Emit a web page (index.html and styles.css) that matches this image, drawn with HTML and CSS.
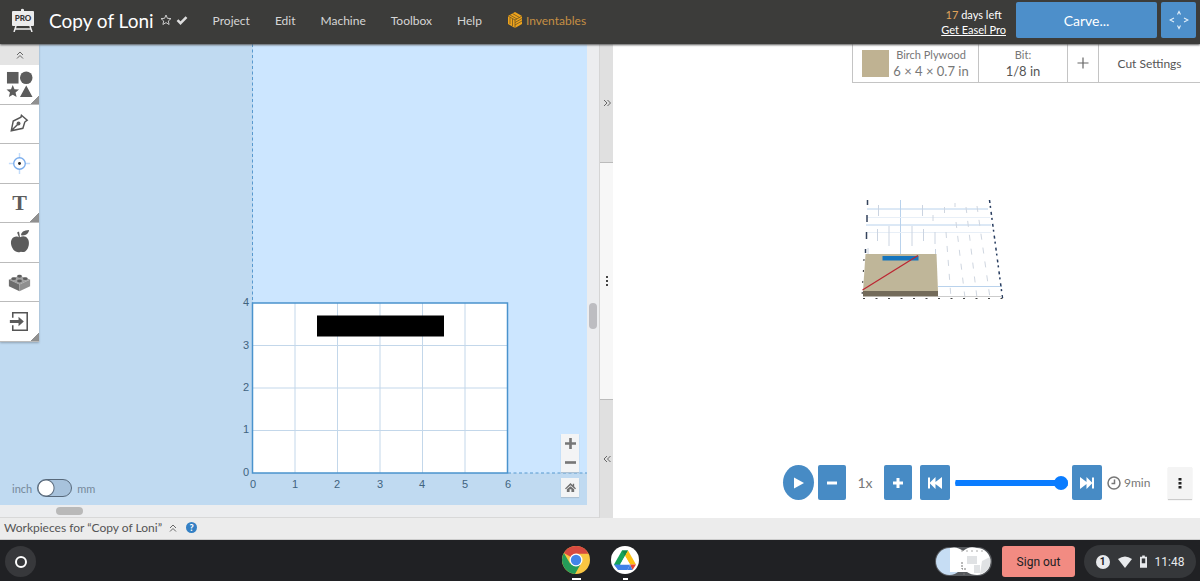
FILE: index.html
```html
<!DOCTYPE html>
<html lang="en">
<head>
<meta charset="utf-8">
<title>Copy of Loni</title>
<link rel="stylesheet" href="styles.css">
</head>
<body>
<header class="topbar">
  <svg class="logo" viewBox="0 0 24 24" role="img" aria-label="Easel Pro"><path d="M10 4V1.500q1-1.500 3 0V4" fill="#eee"/><rect x="1" y="3" width="22" height="15" rx="1" fill="#ececec"/><path d="M5 18l-2 6M19 18l2 6M4 21h16" stroke="#eee" stroke-width="1.500" fill="none"/><text class="logo-text" x="12" y="13" text-anchor="middle">PRO</text></svg>
  <h1 class="title">Copy of Loni</h1>
  <svg class="star" viewBox="0 0 12 12" aria-hidden="true"><path d="M6 1l1.400 3.300 3.600.3-2.700 2.400.8 3.500L6 8.600l-3.100 1.900.8-3.500L1 4.600l3.600-.3z" fill="none" stroke="#ccc" stroke-width="1"/></svg>
  <svg class="check" viewBox="0 0 12 12" aria-hidden="true"><path d="M1.500 6.200l3 3 6-6" fill="none" stroke="#ddd" stroke-width="2.500"/></svg>
  <nav class="menu">
    <a href="#project">Project</a><a href="#edit">Edit</a><a href="#machine">Machine</a><a href="#toolbox">Toolbox</a><a href="#help">Help</a>
    <a href="#inventables" class="brand"><svg viewBox="0 0 16 16" aria-hidden="true"><path d="M8 0l7 4v8l-7 4-7-4V4z" fill="#eea31c"/><path d="M8 16V8L1 4M8 8l7-4M3 5.500v6.500M5.500 7v7M3 3l7 4M5.500 1.500l7 4M8 10.500l7-4M8 13l7-4" stroke="#5b4a22" stroke-width=".7" fill="none"/></svg>Inventables</a>
  </nav>
  <p class="trial"><span><b>17</b> days left</span><a href="#pro">Get Easel Pro</a></p>
  <button class="carve" type="button">Carve...</button>
  <button class="jog" type="button" aria-label="Jog machine"><svg viewBox="0 0 20 20" aria-hidden="true"><path d="M8.500 4.500L10 1.500l1.500 3M8.500 15.500l1.500 3 1.500-3M5 8l-4 2 4 2M15 8l4 2-4 2" fill="none" stroke="#e4f0fa" stroke-width="1.100"/></svg></button>
</header>

<main class="workspace">
  <section class="design" aria-label="Design">
    <div class="canvas">
      <svg class="drawing" viewBox="0 44 587 461" preserveAspectRatio="xMinYMax slice">
        <rect y="44" width="587" height="461" fill="#c0daf1"/>
        <rect x="253" y="44" width="334" height="429" fill="#cce6ff"/>
        <path d="M252.500 44v260M508 473h79" stroke="#5799cf" stroke-dasharray="3 2.500" fill="none"/>
        <rect x="252.500" y="303" width="255" height="170" fill="#fff"/>
        <path d="M295 303v170M337.500 303v170M380 303v170M422.500 303v170M465 303v170M253 345.500h255M253 388h255M253 430.500h255" stroke="#c3d7ea"/>
        <rect x="252.500" y="303" width="255" height="170" fill="none" stroke="#4a93cd" stroke-width="1.500"/>
        <rect x="317" y="315.500" width="127" height="21" fill="#000"/>
        <g class="axis" text-anchor="end"><text x="249" y="306">4</text><text x="249" y="349">3</text><text x="249" y="391">2</text><text x="249" y="433">1</text><text x="249" y="476">0</text></g>
        <g class="axis" text-anchor="middle"><text x="253" y="488">0</text><text x="295" y="488">1</text><text x="337" y="488">2</text><text x="380" y="488">3</text><text x="422" y="488">4</text><text x="465" y="488">5</text><text x="508" y="488">6</text></g>
      </svg>
      <div class="tools" role="toolbar" aria-label="Tools">
        <button class="collapse" type="button" aria-label="Collapse tools"><svg class="chev" viewBox="0 0 8 8" aria-hidden="true"><path d="M1 4l3-3 3 3M1 7.500l3-3 3 3"/></svg></button>
        <div class="tool-list">
          <button class="tool more" type="button" aria-label="Shapes"><svg viewBox="0 0 28 28" aria-hidden="true"><path d="M1 1h12v12H1z"/><circle cx="21" cy="7" r="6.500"/><path d="M7 14.500l1.800 4.400 4.700.4-3.600 3 1.100 4.700-4-2.500L3 27l1.100-4.700-3.600-3 4.700-.4zM21 15l6.500 12h-13z"/></svg></button>
          <button class="tool" type="button" aria-label="Pen"><svg viewBox="0 0 28 28" aria-hidden="true"><path d="M5.500 21.500l2-10 8-4 .5-2 6 5-2.500 2-2 6.500z M6 21l6-6" fill="none" stroke="#555" stroke-width="1.500"/><circle cx="13" cy="14" r="2"/></svg></button>
          <button class="tool" type="button" aria-label="Drill point"><svg viewBox="0 0 28 28" aria-hidden="true"><path d="M14 3v7M14 18v7M3 14h7M18 14h7" stroke="#c2dcfb" stroke-width="1.500"/><circle cx="14" cy="14" r="6" fill="#fff" stroke="#79acec" stroke-width="1.400"/><circle cx="14" cy="14" r="1.500" fill="#222"/></svg></button>
          <button class="tool more letter" type="button" aria-label="Text">T</button>
          <button class="tool" type="button" aria-label="Icons"><svg viewBox="0 0 28 28" aria-hidden="true"><path d="M14.500 8.500c3-1.500 6-1.200 8 1.500s1.500 8-.5 11-4 3.500-6.500 2.500c-4 1.500-7 0-9-4s-2-9 1.500-11c2-1.200 4.500-.8 5.500.2l-2-5 2-1zM15.500 6.500q0-5 8.500-5.500-1 6.500-8.500 5.500z"/></svg></button>
          <button class="tool" type="button" aria-label="Apps"><svg viewBox="0 0 28 28" aria-hidden="true"><path d="M3 11l11-4 11 4-11 5z" fill="#a2a2a2"/><path d="M3 11l11 5v7L3 18z" fill="#6d6d6d"/><path d="M14 16l11-5v7l-11 5z" fill="#909090"/><g fill="#5c5c5c"><ellipse cx="8" cy="10" rx="2.500" ry="1.500"/><ellipse cx="14" cy="7.500" rx="2.500" ry="1.500"/><ellipse cx="20" cy="10" rx="2.500" ry="1.500"/><ellipse cx="14" cy="12.500" rx="2.500" ry="1.500"/></g></svg></button>
          <button class="tool more" type="button" aria-label="Import"><svg viewBox="0 0 28 28" aria-hidden="true"><path d="M7 10V5h15v18H7v-5" fill="none" stroke="#555" stroke-width="1.600"/><path d="M4 12.500h9V9l5.500 5-5.500 5v-3.500H4z"/></svg></button>
        </div>
      </div>
      <div class="units"><span>inch</span><label class="switch"><input type="checkbox" aria-label="Use millimetres"></label><span>mm</span></div>
      <div class="zoom">
        <div class="zoom-pair">
          <button type="button" aria-label="Zoom in"><svg viewBox="0 0 10 10" aria-hidden="true"><path d="M5 0v10M0 5h10" stroke="#777" stroke-width="2.400"/></svg></button>
          <button type="button" aria-label="Zoom out"><svg viewBox="0 0 10 10" aria-hidden="true"><path d="M0 5h10" stroke="#777" stroke-width="2.400"/></svg></button>
        </div>
        <button type="button" aria-label="Reset view"><svg viewBox="0 0 12 12" aria-hidden="true"><path d="M6 1l2.500 2.500V2H10v3l2 2-1 .8L6 3.500 1 7.800 0 7zM6 4.500L10 8v3H7V8H5v3H2V8z" fill="#707070"/></svg></button>
      </div>
    </div>
    <div class="vscroll"><span></span></div>
    <div class="hscroll"><span></span></div>
  </section>
  <div class="splitter">
    <button class="end" type="button" aria-label="Expand design"><svg class="chev" viewBox="0 0 8 8" aria-hidden="true"><path d="M1 1l3 3-3 3M4.500 1l3 3-3 3"/></svg></button>
    <button class="grip" type="button" aria-label="Resize panes"><svg viewBox="0 0 4 10" aria-hidden="true"><path d="M1 0h2v2H1zM1 4h2v2H1zM1 8h2v2H1z" fill="#444"/></svg></button>
    <button class="end" type="button" aria-label="Expand preview"><svg class="chev" viewBox="0 0 8 8" aria-hidden="true"><path d="M4 1L1 4l3 3M7.500 1l-3 3 3 3"/></svg></button>
  </div>
  <section class="preview" aria-label="Preview">
    <svg class="scene" viewBox="613 44 587 474" aria-hidden="true">
      <g fill="none">
        <path d="M867 209h121M866 225h125M938 286.500h64M900.500 200v54" stroke="#b9d2ec"/>
        <path d="M866 232.500h125M867 217.500h123" stroke="#e8eff7"/>
        <path d="M878.500 205v11M922.500 205v11M889 226v20M912 226v20M877.500 229v12M923.500 229v12M935 232v12M868 248v6M935.500 249v5" stroke="#cbd4e1"/>
        <path d="M933 215v9M944.500 207v6M946 232l5 66M955 203v4M956 222l9 76M966 207l11 91M977 206l13 92" stroke="#cfd6e0" stroke-dasharray="6 8"/>
        <path d="M867.500 200v5M867 215v7M866.500 232v7M865.500 249v4" stroke="#34435c" stroke-width="1.500"/>
        <path d="M989.500 200l13 98" stroke="#263b5e" stroke-width="1.500" stroke-dasharray="3 3 2 4"/>
        <path d="M864 259l-2 38" stroke="#333" stroke-dasharray="2 9"/>
        <path d="M938 296.500h64" stroke="#ccc"/>
        <path d="M863 298.500h140" stroke="#444" stroke-dasharray="2 10.500"/>
      </g>
      <path d="M865.500 254h71l1.500 37.500h-75z" fill="#bfb699"/><path d="M863 291h75v5.500h-75z" fill="#736b5a"/>
      <path d="M882.500 256h36v4.500h-36z" fill="#1675bd"/><path d="M862.500 290l55.500-34.500" stroke="#bc2632" stroke-width="1.300"/>
    </svg>
    <div class="settings">
      <button class="material" type="button"><span class="swatch"></span><span class="pair"><small>Birch Plywood</small><span>6 × 4 × 0.7 in</span></span></button>
      <button class="bit" type="button"><span class="pair"><small>Bit:</small><span>1/8 in</span></span></button>
      <button class="add" type="button" aria-label="Add bit"><svg viewBox="0 0 12 12" aria-hidden="true"><path d="M6 .5v11M.5 6h11" stroke="#666" stroke-width="1.200"/></svg></button>
      <button class="cut" type="button">Cut Settings</button>
    </div>
    <div class="player">
      <button class="blue play" type="button" aria-label="Play"><svg viewBox="0 0 14 14" aria-hidden="true"><path d="M2 1.500L12 7 2 12.500z"/></svg></button>
      <button class="blue" type="button" aria-label="Slower"><svg viewBox="0 0 14 14" aria-hidden="true"><path d="M2 5.500h10v3H2z"/></svg></button>
      <span class="speed">1x</span>
      <button class="blue" type="button" aria-label="Faster"><svg viewBox="0 0 14 14" aria-hidden="true"><path d="M5.500 2h3v3.500H12v3H8.500V12h-3V8.500H2v-3h3.500z"/></svg></button>
      <button class="blue skip first" type="button" aria-label="Start"><svg viewBox="0 0 14 14" aria-hidden="true"><path d="M0 1.500h2v5L7.500 1v5L14 1v12L7.500 8v5L2 7.500v5H0z"/></svg></button>
      <input class="seek" type="range" min="0" max="100" value="100" aria-label="Position">
      <button class="blue skip" type="button" aria-label="End"><svg viewBox="0 0 14 14" aria-hidden="true"><path d="M14 1.500h-2v5L6.500 1v5L0 1v12l6.500-5v5L12 7.500v5h2z"/></svg></button>
      <svg class="clock" viewBox="0 0 14 14" aria-hidden="true"><circle cx="7" cy="7" r="6"/><path d="M7.500 3.500V7.500h-3"/></svg>
      <span class="time">9min</span>
      <button class="kebab" type="button" aria-label="More"><svg viewBox="0 0 4 12" aria-hidden="true"><path d="M.5 1h3v2.500h-3zM.5 5h3v2.500h-3zM.5 9h3v2.500h-3z" fill="#222"/></svg></button>
    </div>
  </section>
</main>

<div class="workpieces"><span>Workpieces for “Copy of Loni”</span><svg class="chev" viewBox="0 0 8 8" aria-hidden="true"><path d="M1 4l3-3 3 3M1 7.500l3-3 3 3"/></svg><button class="help" type="button" aria-label="Help">?</button></div>

<footer class="shelf">
  <button class="launcher" type="button" aria-label="Launcher"><span></span></button>
  <div class="apps">
    <button class="app" type="button" aria-label="Chrome"><svg viewBox="0 0 28 28" aria-hidden="true"><circle cx="14" cy="14" r="14" fill="#f9c642"/><path d="M14 14L1.900 7A14 14 0 0 1 26.500 7.700H14z" fill="#d74a40"/><path d="M1.900 7A14 14 0 0 0 13 28l6-10.500H8z" fill="#259c59"/><circle cx="14" cy="14" r="6.500" fill="#fff"/><circle cx="14" cy="14" r="5.200" fill="#4285e8"/></svg></button>
    <button class="app small" type="button" aria-label="Drive"><svg viewBox="0 0 28 28" aria-hidden="true"><circle cx="14" cy="14" r="14" fill="#fff"/><path d="M11 4.500h6L7 23l-4-4.500z" fill="#15a45a"/><path d="M11 4.500h6L14 10z" fill="#118846"/><path d="M17 4.500l8 14h-6L14 10z" fill="#fbc014"/><path d="M3 18.500h16l-2.500 5.500H7z" fill="#4081e8"/><path d="M19 18.500h6L21.500 24z" fill="#e84435"/><path d="M14 10l5 8.500H9z" fill="#fff"/><path d="M19 18.500l2.500 5.500h-5z" fill="#4081e8"/></svg></button>
  </div>
  <div class="tray">
    <button class="holding" type="button" aria-label="Recent screen captures"><svg viewBox="0 0 57 29" aria-hidden="true"><rect width="57" height="29" rx="14.500" fill="#56595d"/><circle cx="14.500" cy="14.500" r="13.500" fill="#c6ddf4"/><path d="M15 1a14 14 0 0 1 13 3 14 14 0 0 1 14-3 13.500 13.500 0 0 1 0 27q-6 0-10-3H15z" fill="#fff"/><path d="M47 14l8-4q2 14-10 17zM39 18h6v8h-6zM32 9h10v8h-10z" fill="#e0e2e4"/><path d="M27 15v7h5M29 28v-3" fill="none" stroke="#777" stroke-dasharray="2 1"/><path d="M26 4h22" stroke="#aaa" stroke-dasharray="2 3"/></svg></button>
    <button class="signout" type="button">Sign out</button>
    <button class="status" type="button"><span class="count">1</span><svg class="wifi" viewBox="0 0 14 12" aria-hidden="true"><path d="M0 3q7-5 14 0L7 12z" fill="#e8eaed"/></svg><svg class="battery" viewBox="0 0 8 14" aria-hidden="true"><path d="M2.500 0h3v1.500H8V14H0V1.500h2.500z" fill="#e8eaed"/><path d="M2 3.500h4V9H2z" fill="#35373a"/></svg><span>11:48</span></button>
  </div>
</footer>
</body>
</html>
```

FILE: styles.css
```css
* { box-sizing: border-box; }
body { margin: 0; height: 100vh; display: flex; flex-direction: column; overflow: hidden; font-family: Lato, "Liberation Sans", sans-serif; color: #555; background: #fff; }
button { margin: 0; padding: 0; border: 0; background: none; font: inherit; color: inherit; display: flex; align-items: center; justify-content: center; }
svg { display: block; flex: none; }
.chev { width: 8px; height: 8px; fill: none; stroke: #666; stroke-width: 1; }

.topbar { height: 44px; flex: none; display: flex; align-items: center; padding: 0 4px 4px 11px; background: #3c3c3a; box-shadow: 0 1px 2px #555; position: relative; z-index: 2; }
.logo { width: 24px; height: 24px; }
.logo-text { font-size: 8px; font-weight: 900; fill: #333; }
.title { margin: 0 6px 0 14px; font-size: 19px; font-weight: 400; color: #fff; white-space: nowrap; }
.star, .check { width: 12px; height: 12px; }
.check { margin-left: 4px; }
.menu { display: flex; align-items: center; gap: 25px; margin-left: 25px; font-size: 12px; font-weight: 400; }
.menu a { color: #d6d6d6; text-decoration: none; }
.menu .brand { display: flex; align-items: center; gap: 3px; color: #c58f44; }
.brand svg { width: 16px; height: 16px; }
.trial { margin: 3px 10px 0 auto; font-size: 11px; line-height: 15px; color: #fff; display: flex; flex-direction: column; align-items: center; }
.trial b { color: #e2a45a; font-weight: 400; }
.trial a { color: inherit; }
.carve, .jog { height: 36px; border-radius: 2px; background: #4d8fca; color: #fff; }
.carve { width: 141px; font-size: 14px; }
.jog { width: 35px; margin-left: 4px; }
.jog svg { width: 20px; height: 20px; }

.workspace { flex: 1; min-height: 0; display: flex; }
.design { flex: 599; min-width: 0; display: grid; grid-template-columns: 1fr 12px; grid-template-rows: 1fr 13px; background: #ecedef; }
.canvas { position: relative; min-height: 0; min-width: 0; overflow: hidden; }
.drawing { position: absolute; inset: 0; width: 100%; height: 100%; }
.axis { font: 11px "Liberation Sans", sans-serif; fill: #41637f; }
.tools { position: relative; width: 39px; background: #fff; box-shadow: 0 1px 2px #8fa3b5; }
.collapse { width: 100%; height: 21px; background: #e4e4e4; }
.tool-list { height: 277px; display: grid; grid-auto-rows: 1fr; }
.tool { border-bottom: 1px solid #bbb; fill: #5c5c5c; }
.tool svg { width: 27px; height: 27px; }
.more { background: linear-gradient(135deg, transparent 50%, #909090 50%) right bottom / 9px 9px no-repeat; }
.letter { font: bold 22px "Liberation Serif", serif; color: #5c5c5c; }
.units { position: absolute; left: 12px; bottom: 8px; display: flex; align-items: center; gap: 5px; font-size: 11px; color: #76899a; }
.switch input { appearance: none; display: block; margin: 0; width: 35px; height: 18px; border: 1px solid #58697b; border-radius: 9px; background: radial-gradient(circle at 8px 8px, #fff 7px, #58697b 8px, #a7c2dc 9px); }
.zoom { position: absolute; right: 8px; bottom: 8px; display: flex; flex-direction: column; gap: 6px; }
.zoom button { width: 18px; height: 19px; }
.zoom-pair, .zoom > button { background: #f3f4f5; box-shadow: 0 1px 1px #adc1d3; }
.zoom svg { width: 11px; height: 11px; }
.vscroll { padding: 259px 2px 0 2px; }
.vscroll span { display: block; height: 26px; border-radius: 4px; background: #bdbdc1; }
.hscroll { grid-column: 1 / 3; padding: 2px 0 0 56px; border-bottom: 1px solid #d8d8d8; }
.hscroll span { display: block; width: 27px; height: 8px; border-radius: 4px; background: #b9b9b9; }
.splitter { width: 14px; flex: none; display: flex; flex-direction: column; background: #f7f7f7; border-left: 1px solid #d5d5d5; }
.splitter .end { flex: 1; background: #e0e0e0; }
.splitter .grip { flex: 2; border: solid #bbb; border-width: 1px 0; }
.grip svg { width: 4px; height: 10px; }

.preview { flex: 587; min-width: 0; position: relative; display: flex; flex-direction: column; justify-content: space-between; align-items: flex-end; background: #fff; }
.scene { position: absolute; inset: 0; width: 100%; height: 100%; }
.settings { position: relative; height: 39px; display: flex; border: solid #c4c4c4; border-width: 0 0 1px 1px; background: #fff; }
.settings button + button { border-left: 1px solid #c4c4c4; }
.pair { display: flex; flex-direction: column; align-items: center; font-size: 13px; line-height: 18px; }
.pair small { font-size: 11px; line-height: 15px; color: #777; }
.material { width: 125px; gap: 4px; color: #777; }
.swatch { width: 27px; height: 27px; background: #bfb292; }
.bit { width: 89px; }
.add { width: 31px; }
.add svg { width: 12px; height: 12px; }
.cut { width: 102px; font-size: 12px; }
.player { position: relative; display: flex; align-items: center; padding: 0 8px 18px 0; color: #777; }
.blue { width: 28px; height: 35px; border-radius: 2px; background: #478bc5; fill: #fff; }
.blue svg { width: 14px; height: 14px; }
.play { width: 31px; border-radius: 50%; margin-right: 4px; }
.skip { width: 30px; }
.first { margin-left: 8px; }
.speed { width: 38px; text-align: center; font-size: 14px; }
.seek { appearance: none; width: 113px; height: 14px; margin: 0 4px 0 5px; background: linear-gradient(#0a7cff, #0a7cff) center / 100% 6px no-repeat; border-radius: 7px; }
.seek::-webkit-slider-thumb { appearance: none; width: 14px; height: 14px; border-radius: 50%; background: #0a7cff; }
.clock { width: 14px; height: 14px; margin: 0 3px 0 5px; fill: none; stroke: #777; stroke-width: 1.5px; }
.time { width: 28px; font-size: 12px; }
.kebab { width: 24px; height: 32px; margin-left: 16px; background: #f4f4f4; box-shadow: 0 1px 1px #ccc; }
.kebab svg { width: 4px; height: 12px; }

.workpieces { flex: none; height: 22px; display: flex; align-items: center; padding: 0 0 2px 4px; background: #ececec; border-bottom: 1px solid #ccc; font-size: 12px; gap: 7px; }
.help { width: 11px; height: 11px; margin-left: 2px; border-radius: 50%; background: #3480c4; color: #fff; font-size: 9px; font-weight: 900; }

.shelf { flex: none; height: 41px; display: grid; grid-template-columns: 1fr auto 1fr; align-items: center; padding: 2px 4px 0 5px; background: #202124; font-family: Roboto, sans-serif; }
.launcher { width: 31px; height: 31px; border-radius: 50%; background: #37383b; }
.launcher span { width: 12px; height: 12px; border: 2px solid #fff; border-radius: 50%; }
.apps { display: flex; gap: 21px; align-self: end; }
.app { flex-direction: column; gap: 4px; padding-bottom: 1px; }
.app svg { width: 28px; height: 28px; }
.app::after { content: ""; width: 9px; height: 2px; background: #fff; }
.small::after { width: 5px; }
.tray { display: flex; align-items: center; justify-content: flex-end; }
.holding svg { width: 57px; height: 29px; }
.signout { width: 73px; height: 31px; margin: 0 9px 0 10px; border-radius: 3px; background: #f28b82; color: #202124; font-size: 12px; }
.status { width: 112px; height: 33px; border-radius: 17px; background: #35373a; color: #e8eaed; font-size: 12px; gap: 8px; }
.count { width: 14px; height: 14px; border-radius: 50%; background: #e8eaed; color: #202124; font-size: 10px; line-height: 14px; font-weight: 700; }
.wifi { width: 14px; height: 12px; }
.battery { width: 7px; height: 13px; }
```
